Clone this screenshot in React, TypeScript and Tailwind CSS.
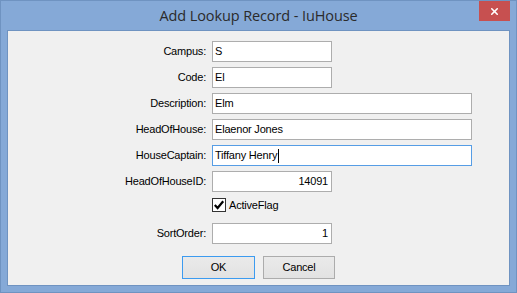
import { X } from "lucide-react";

const UI_FONT = "font-['Liberation_Sans',Arial,sans-serif]";

type Field = {
  label: string;
  value: string;
  wide?: boolean;
  numeric?: boolean;
  focused?: boolean;
};

const FIELDS: Field[] = [
  { label: "Campus:", value: "S" },
  { label: "Code:", value: "El" },
  { label: "Description:", value: "Elm", wide: true },
  { label: "HeadOfHouse:", value: "Elaenor Jones", wide: true },
  { label: "HouseCaptain:", value: "Tiffany Henry", wide: true, focused: true },
  { label: "HeadOfHouseID:", value: "14091", numeric: true },
];

function TextBox({ f }: { f: Field }) {
  return (
    <div
      className={`flex h-[21px] items-center border bg-white pl-[2px] pr-[3px] ${
        f.wide ? "w-[260px]" : "w-[120px]"
      } ${f.focused ? "border-[#569de5]" : "border-[#adadad]"} ${
        f.numeric ? "justify-end" : ""
      }`}
    >
      <span className="whitespace-pre text-[#000]">{f.value}</span>
      {f.focused && <span className="ml-[1px] h-[14px] w-px bg-black" />}
    </div>
  );
}

function Row({ label, children }: { label?: string; children: React.ReactNode }) {
  return (
    <div className="flex h-[21px] items-center">
      <div className="w-[199px] pr-[1px] text-right text-[#000]">{label}</div>
      <div className="ml-[5px]">{children}</div>
    </div>
  );
}

export default function App() {
  return (
    <div className={`flex h-[293px] w-[517px] flex-col border border-[#6f93c1] bg-[#85a9d7] ${UI_FONT}`}>
      {/* Title bar */}
      <div className="relative flex h-[29px] items-center justify-center">
        <span className="font-['Open_Sans',sans-serif] text-[14.5px] tracking-[-0.1px] text-[#2b2b2b]">
          Add Lookup Record - IuHouse
        </span>
        <div className="absolute right-[6px] top-0 flex h-[20px] w-[31px] items-center justify-center bg-[#c75050]">
          <X className="h-[11px] w-[11px] text-white" strokeWidth={3.5} />
        </div>
      </div>

      {/* Client area */}
      <div className="mx-[6px] flex h-[256px] flex-col border border-[#6f93c1] bg-[#f0f0f0] pt-[10px] text-[11px] tracking-[-0.2px]">
        <div className="flex flex-col gap-[5px]">
          {FIELDS.map((f) => (
            <Row key={f.label} label={f.label}>
              <TextBox f={f} />
            </Row>
          ))}
          <div className="flex h-[21px] items-start">
            <div className="ml-[204px] flex items-center gap-[3px]">
              <span className="flex h-[14px] w-[14px] items-center justify-center border border-[#333] bg-white">
                <svg viewBox="0 0 12 12" className="h-[12px] w-[12px]">
                  <path d="M1.8 6 L4.6 9 L10.2 2.2" fill="none" stroke="#000" strokeWidth="2.2" />
                </svg>
              </span>
              <span className="text-[#000]">ActiveFlag</span>
            </div>
          </div>
          <Row label="SortOrder:">
            <TextBox f={{ label: "", value: "1", numeric: true }} />
          </Row>
        </div>

        <div className="ml-[174px] mt-[12px] flex gap-[8px]">
          <button className="flex h-[23px] w-[73px] items-center justify-center border border-[#3c9bf0] bg-[linear-gradient(#eaeaea,#e2e2e2)] text-[#000]">
            OK
          </button>
          <button className="flex h-[23px] w-[72px] items-center justify-center border border-[#acacac] bg-[linear-gradient(#eaeaea,#e2e2e2)] text-[#000]">
            Cancel
          </button>
        </div>
      </div>
    </div>
  );
}
